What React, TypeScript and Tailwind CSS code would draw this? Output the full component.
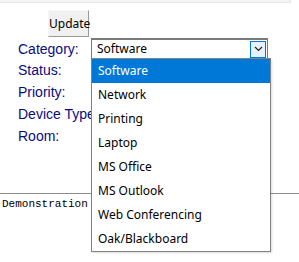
import React from "react";

const options = [
  "Software",
  "Network",
  "Printing",
  "Laptop",
  "MS Office",
  "MS Outlook",
  "Web Conferencing",
  "Oak/Blackboard",
];

const labels = ["Status:", "Priority:", "Device Type:", "Room:"];

export default function App() {
  return (
    <div className="relative w-[299px] h-[262px] bg-white overflow-hidden font-['Liberation_Sans',Arial,sans-serif]">
      <div className="h-[3px] w-[291px] bg-[#f3f3f3] border-b border-r border-[#e6e6e6]" />

      <div className="ml-[48px] mt-[7px] flex">
        <button className="w-[41px] h-[27px] bg-[#f0f0f0] border border-t-[#f7f7f7] border-l-[#f7f7f7] border-r-[#9a9a9a] border-b-[#9a9a9a] text-[12px] text-black font-['Noto_Sans',sans-serif] leading-none px-0">
          Update
        </button>
      </div>

      <div className="ml-[18px] mt-[1px] flex flex-col text-[14px] text-[#0a0a80] leading-none">
        <div className="flex items-center h-[21px]">
          <span className="w-[73px]">Category:</span>
          <div className="flex items-center w-[177px] h-[21px] border border-[#7a7a7a] border-t-2 bg-white">
            <span className="flex-1 pl-[5px] text-[12px] text-black font-['Noto_Sans',sans-serif]">
              Software
            </span>
            <div className="w-[16px] h-[17px] mr-[1px] border border-[#0078d7] bg-[#e5f1fb] flex items-center justify-center">
              <svg width="9" height="6" viewBox="0 0 9 6">
                <path d="M1 1l3.5 3.5L8 1" fill="none" stroke="#222" strokeWidth="1.2" />
              </svg>
            </div>
          </div>
        </div>
        <div className="flex flex-col mt-[3px] gap-[6px]">
          {labels.map((l) => (
            <div key={l} className="h-[16px] flex items-center">
              {l}
            </div>
          ))}
        </div>
      </div>

      <div className="mt-[49px] border-t border-[#8c8c8c]">
        <div className="pl-[2px] pt-[5px] text-[11px] leading-none text-black font-['Liberation_Mono',monospace]">
          Demonstration
        </div>
      </div>

      <div className="absolute left-[91px] top-[58px] w-[180px] border border-[#828282] bg-white font-['Noto_Sans',sans-serif] text-[12px] shadow-[1px_1px_2px_rgba(0,0,0,0.15)]">
        {options.map((o, i) => (
          <div
            key={o}
            className={
              i === 0
                ? "h-[24px] flex items-center pl-[6px] bg-[#0078d7] text-white"
                : "h-[24px] flex items-center pl-[6px] text-black"
            }
          >
            {o}
          </div>
        ))}
      </div>
    </div>
  );
}
